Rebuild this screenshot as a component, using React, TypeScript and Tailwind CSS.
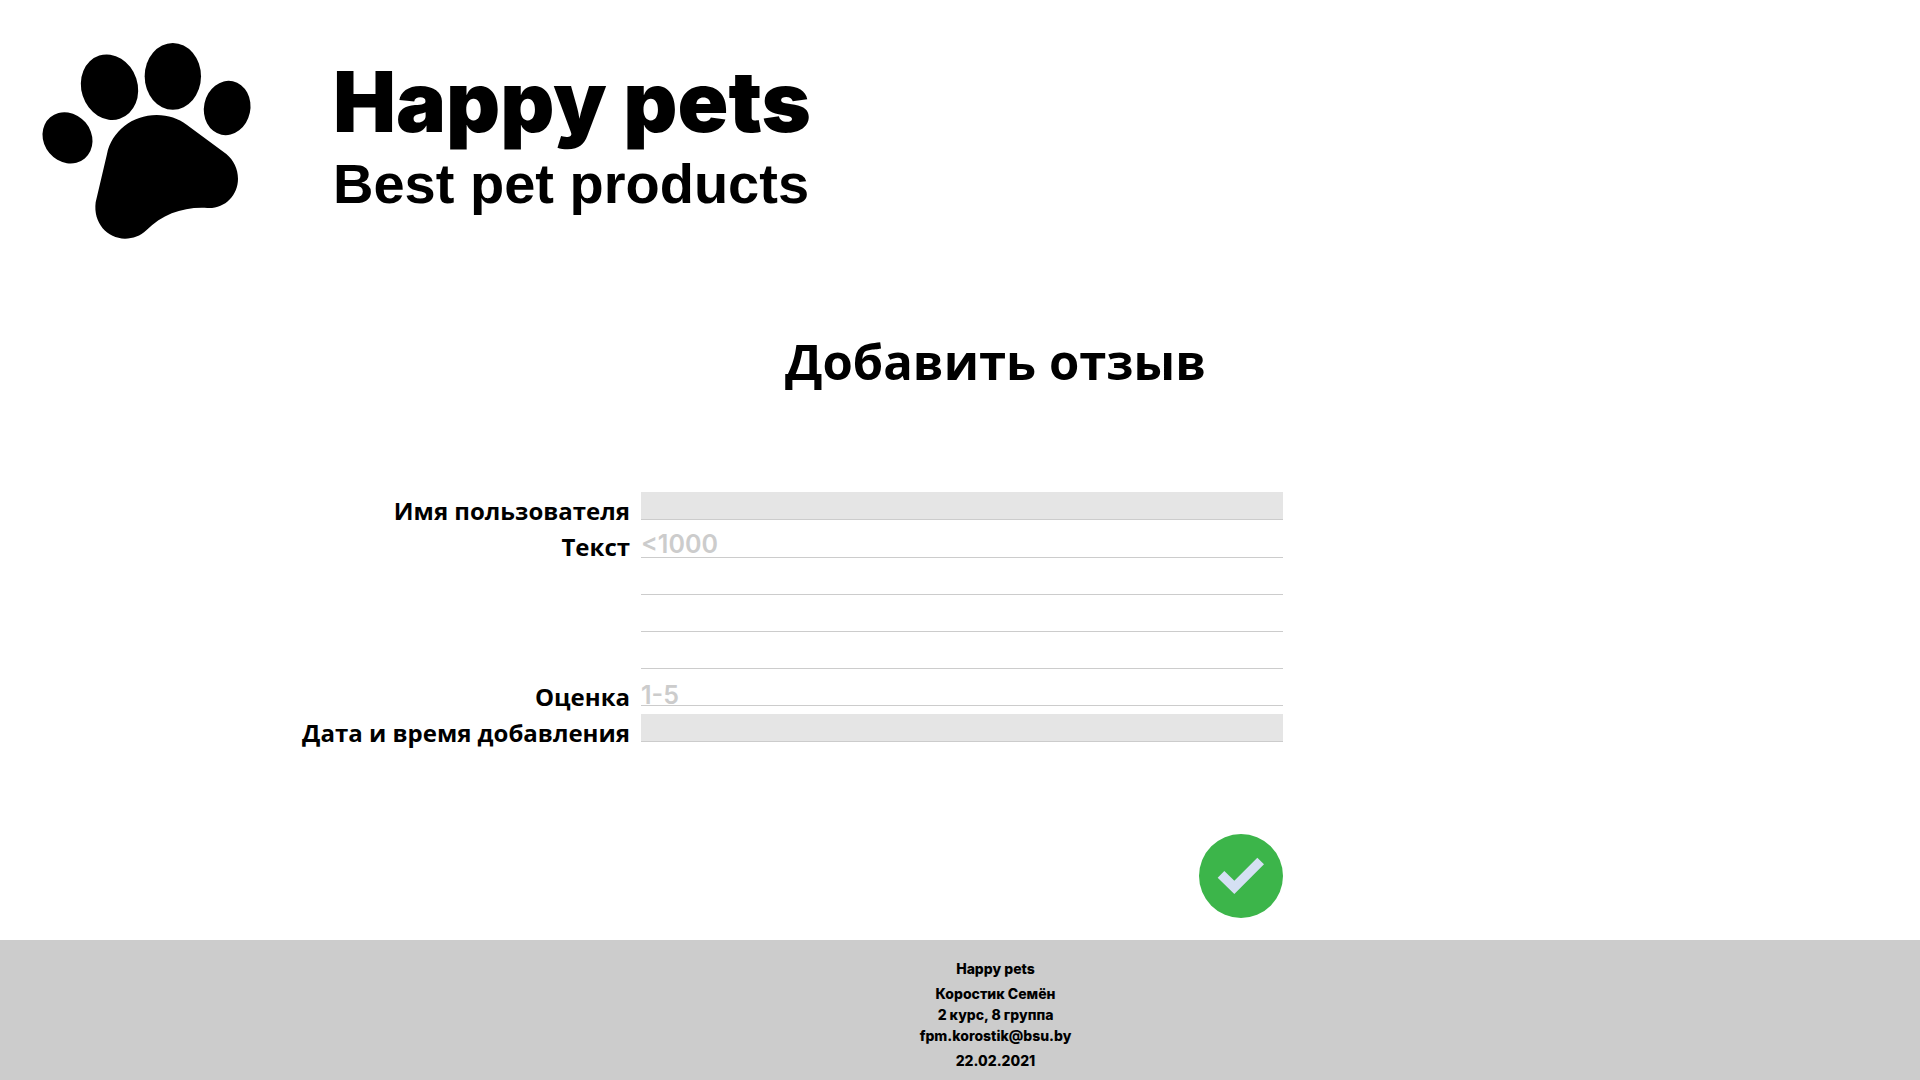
function PawLogo() {
  return (
    <svg viewBox="0 0 780 720" className="h-[240px] w-[260px] shrink-0" fill="#000" aria-hidden="true">
      <ellipse cx="142.500" cy="353.500" rx="71" ry="80.500" transform="rotate(-40 142.500 353.500)" />
      <ellipse cx="268.500" cy="201.500" rx="84.500" ry="99.500" transform="rotate(-18 268.500 201.500)" />
      <ellipse cx="458.500" cy="169" rx="84.500" ry="100" />
      <ellipse cx="621.500" cy="264" rx="69.500" ry="82" transform="rotate(12 621.500 264)" />
      <path d="M410 285C445 285 475 296 500 314L619 402C641 420 654 447 654 476C654 527 613 567 562 564C490 560 429 582 379 631C361 648 339 656 315 656C262 656 219 609 227 547L261 402C275 334 337 285 410 285Z" />
    </svg>
  );
}

function CheckIcon() {
  return (
    <svg viewBox="0 0 252 252" className="size-full" aria-hidden="true">
      <circle cx="126" cy="126" r="126" fill="#3cb54a" />
      <polygon points="76,111 106,140 175,71 195,91 106,180 56,131" fill="#d5e0f3" />
    </svg>
  );
}

const labelClass = "self-end pr-[11px] text-right text-[24px] leading-[37px] font-bold";
const fieldClass =
  "block w-full rounded-none border-b border-[#cccccc] font-[Inter,sans-serif] text-[25px] font-semibold outline-none placeholder:text-[#cccccc] placeholder:opacity-100";
const rowClass = "col-span-3 grid grid-cols-subgrid";

export default function App() {
  return (
    <div className="flex min-h-screen flex-col bg-white font-['Open_Sans',sans-serif] text-black">
      <header className="flex items-start pt-5 pl-5">
        <PawLogo />
        <div className="pt-8 pl-[53px]">
          <p className="font-[Inter,sans-serif] text-[84px] leading-[100px] font-black whitespace-nowrap">Happy pets</p>
          <p className="font-['Liberation_Sans',sans-serif] text-[56px] leading-[64px] font-bold whitespace-nowrap">
            Best pet products
          </p>
        </div>
      </header>

      <main className="flex flex-1 flex-col">
        <h1 className="mt-[67px] pl-[71px] text-center text-[49px] leading-[68px] font-bold">Добавить отзыв</h1>

        <form
          className="mt-[97px] grid grid-cols-[641fr_642fr_637fr]"
          onSubmit={(event) => event.preventDefault()}
        >
          <div className={rowClass}>
            <label htmlFor="user" className={labelClass + " h-7"}>Имя пользователя</label>
            <input id="user" type="text" disabled className={fieldClass + " h-7 bg-[#e5e5e5]"} />
          </div>
          <div className={rowClass + " mt-px"}>
            <label htmlFor="review" className={labelClass + " self-start pt-[7px]"}>Текст</label>
            <textarea
              id="review"
              rows={4}
              maxLength={1000}
              placeholder="<1000"
              className="block h-[148px] w-full resize-none bg-[repeating-linear-gradient(to_bottom,transparent_0,transparent_36px,#cccccc_36px,#cccccc_37px)] pt-[5px] font-[Inter,sans-serif] text-[25px] leading-[37px] font-semibold outline-none placeholder:text-[#cccccc] placeholder:opacity-100"
            />
          </div>
          <div className={rowClass}>
            <label htmlFor="rating" className={labelClass + " h-7"}>Оценка</label>
            <input
              id="rating"
              type="text"
              inputMode="numeric"
              placeholder="1-5"
              className={fieldClass + " h-[37px] pt-[16px] leading-5"}
            />
          </div>
          <div className={rowClass + " mt-2"}>
            <label htmlFor="date" className={labelClass + " h-7"}>Дата и время добавления</label>
            <input id="date" type="text" disabled className={fieldClass + " h-7 bg-[#e5e5e5]"} />
          </div>
          <button
            type="submit"
            aria-label="Отправить"
            className="col-start-2 mt-[92px] size-[84px] cursor-pointer justify-self-end rounded-full"
          >
            <CheckIcon />
          </button>
        </form>
      </main>

      <footer className="mt-[22px] bg-[#cccccc] pt-[18px] pb-[9px] pl-[71px] text-center font-[Inter,sans-serif] text-[14px] leading-[21px] font-extrabold">
        <p>Happy pets</p>
        <address className="my-1 not-italic">
          <p>Коростик Семён</p>
          <p>2 курс, 8 группа</p>
          <p>fpm.korostik@bsu.by</p>
        </address>
        <p>22.02.2021</p>
      </footer>
    </div>
  );
}
